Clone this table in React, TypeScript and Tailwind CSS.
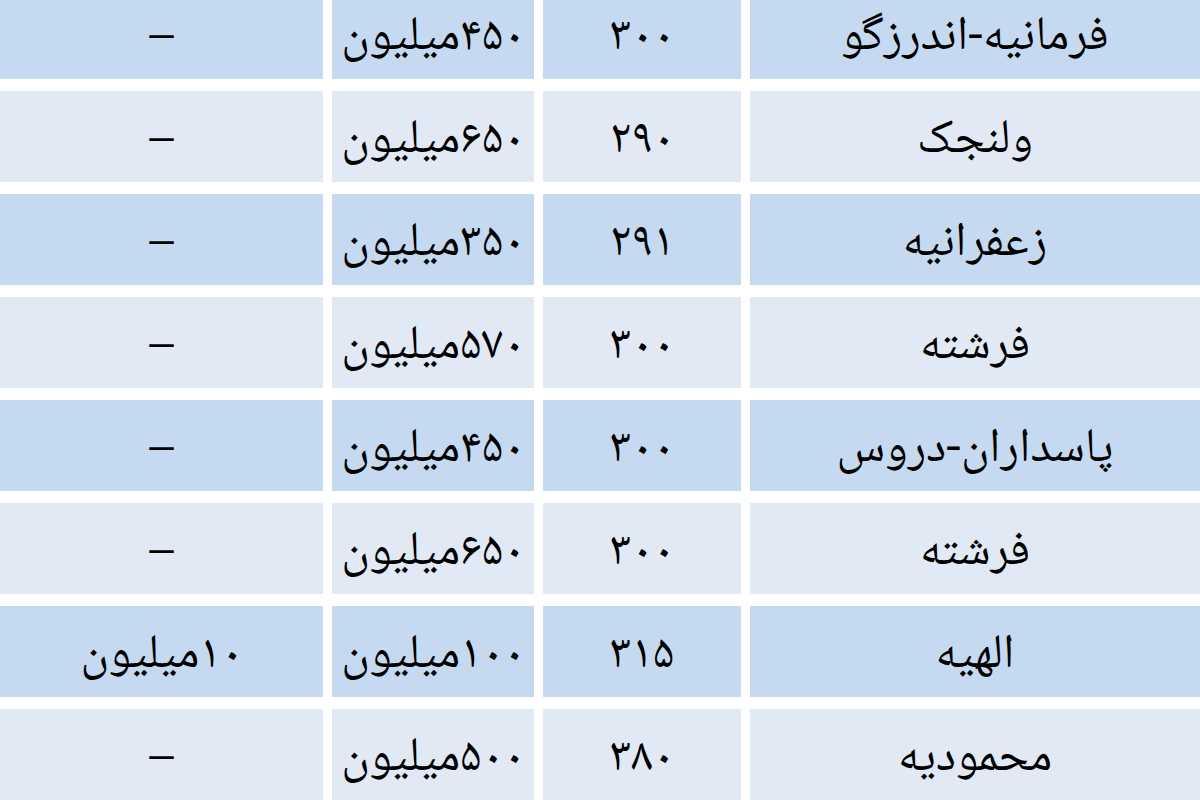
const rows = [
  { area: 'فرمانیه-اندرزگو', meter: '۳۰۰', rent: '۴۵۰میلیون', monthly: '–' },
  { area: 'ولنجک', meter: '۲۹۰', rent: '۶۵۰میلیون', monthly: '–' },
  { area: 'زعفرانیه', meter: '۲۹۱', rent: '۳۵۰میلیون', monthly: '–' },
  { area: 'فرشته', meter: '۳۰۰', rent: '۵۷۰میلیون', monthly: '–' },
  { area: 'پاسداران-دروس', meter: '۳۰۰', rent: '۴۵۰میلیون', monthly: '–' },
  { area: 'فرشته', meter: '۳۰۰', rent: '۶۵۰میلیون', monthly: '–' },
  { area: 'الهیه', meter: '۳۱۵', rent: '۱۰۰میلیون', monthly: '۱۰میلیون' },
  { area: 'محمودیه', meter: '۳۸۰', rent: '۵۰۰میلیون', monthly: '–' },
];

export default function App() {
  return (
    <div className="w-[1200px] h-[800px] overflow-hidden bg-white">
      <div
        dir="rtl"
        className="grid grid-cols-[450px_198px_202px_1fr] gap-x-[9px] gap-y-[12px] mt-[-12px] text-black text-[48px] leading-none"
        style={{ fontFamily: '"Noto Naskh Arabic", "Noto Sans Arabic", "DejaVu Sans", sans-serif' }}
      >
        {rows.map((r, i) => {
          const bg = i % 2 === 0 ? 'bg-[#c5daf1]' : 'bg-[#e1e9f5]';
          return [r.area, r.meter, r.rent, r.monthly].map((cell, j) => (
            <div key={`${i}-${j}`} className={`${bg} h-[91px] flex items-center justify-center pt-[10px]`}>
              {cell}
            </div>
          ));
        })}
      </div>
    </div>
  );
}
